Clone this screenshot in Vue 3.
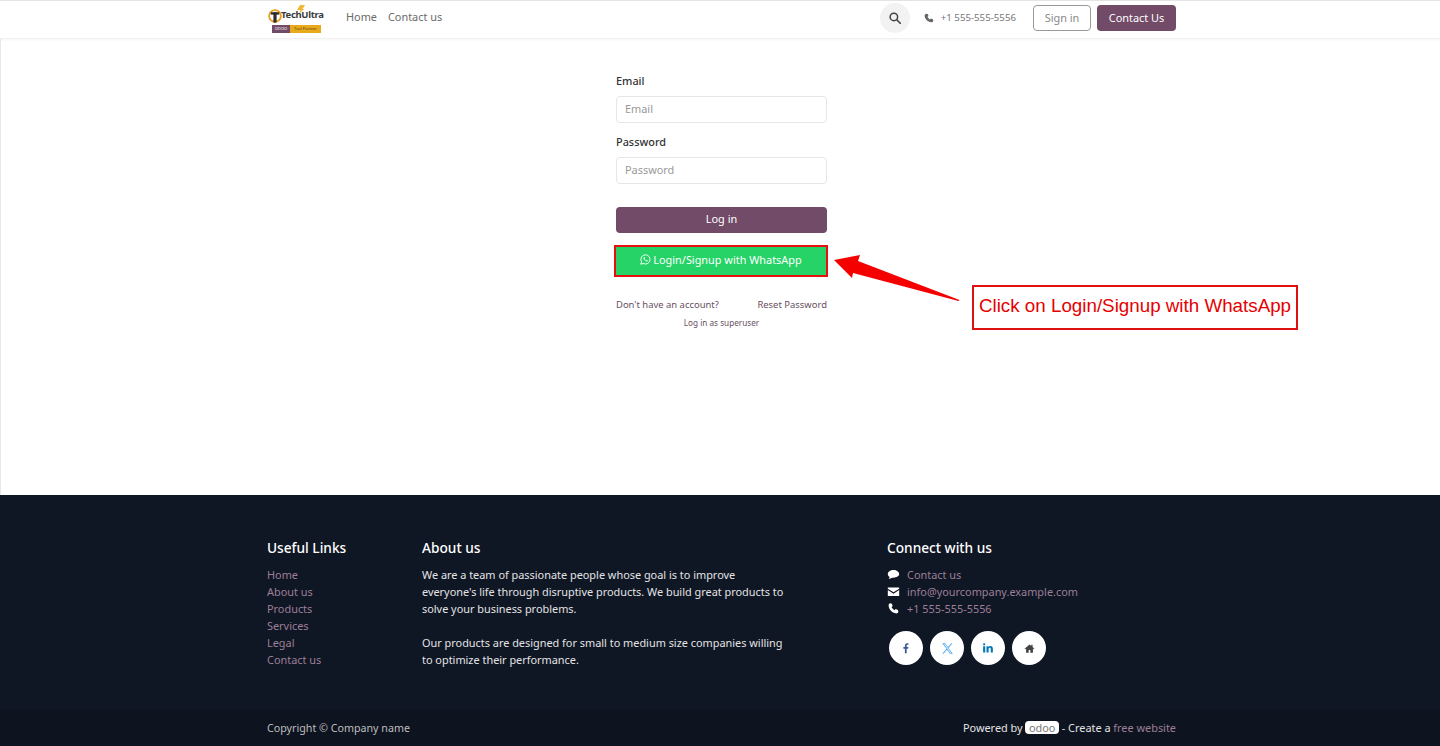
<template>
  <div class="page">
    <header class="topbar">
      <div class="wrap topbar-in">
        <div class="logo">
          <svg class="logo-flame" width="9" height="9" viewBox="0 0 9 9"><path d="M4 0h5L6.500 4 8 4 3 9 4.500 5H1Z" fill="#f2b632" /></svg>
          <svg class="logo-mark" width="14" height="14" viewBox="0 0 15 15">
            <circle cx="7.500" cy="7.500" r="6.300" fill="none" stroke="#e8a020" stroke-width="2" />
            <rect x="3" y="3.500" width="9" height="2.500" fill="#2b2b2b" />
            <rect x="5.800" y="3.500" width="3.400" height="11" fill="#2b2b2b" />
          </svg>
          <div class="logo-text">
            <span class="logo-name">TechUltra</span>
            <div class="logo-tags"><span class="tag-a">ODOO</span><span class="tag-b">Tool Partner</span></div>
          </div>
        </div>
        <nav class="nav">
          <a v-for="item in navItems" :key="item">{{ item }}</a>
        </nav>
        <div class="spacer"></div>
        <div class="search">
          <svg width="12" height="12" viewBox="0 0 16 16">
            <circle cx="6.500" cy="6.500" r="5" fill="none" stroke="#444" stroke-width="2" />
            <path d="M10.300 10.300 15 15" stroke="#444" stroke-width="2.200" stroke-linecap="round" />
          </svg>
        </div>
        <div class="phone">
          <svg width="10" height="10" viewBox="0 0 16 16"><path :d="phonePath" fill="#666" /></svg>
          <span>+1 555-555-5556</span>
        </div>
        <a class="btn-signin">Sign in</a>
        <a class="btn-contact">Contact Us</a>
      </div>
    </header>

    <main class="main">
      <div class="wrap main-in">
        <form class="login" @submit.prevent>
          <label class="lbl">Email</label>
          <input class="field" placeholder="Email" />
          <label class="lbl lbl-pw">Password</label>
          <input class="field" placeholder="Password" />
          <button class="btn-login">Log in</button>
          <div class="wa-outline">
            <button class="btn-wa">
              <svg width="11" height="11" viewBox="0 0 16 16">
                <path d="M8 1.200A6.700 6.700 0 0 0 2.200 11.300L1.200 14.800l3.600-.95A6.700 6.700 0 1 0 8 1.200Z" fill="none" stroke="#fff" stroke-width="1.400" />
                <path d="M5.800 4.700c-.9.700-.9 2 .1 3.400 1 1.500 2.500 2.800 4 2.900.9 0 1.500-.6 1.500-1.400l-1.500-.8-.7.700c-.9-.3-2-1.400-2.400-2.400l.6-.7-.7-1.600Z" fill="#fff" />
              </svg>
              Login/Signup with WhatsApp
            </button>
          </div>
          <div class="login-links">
            <a>Don't have an account?</a>
            <a>Reset Password</a>
          </div>
          <a class="superuser">Log in as superuser</a>
        </form>
      </div>

      <svg class="arrow" width="130" height="55" viewBox="0 0 130 55">
        <path d="M0 10 26 5 24 11 125.500 50 124.500 51 19 23 18 28Z" fill="#f50000" />
      </svg>
      <div class="callout">Click on Login/Signup with WhatsApp</div>
    </main>

    <footer class="footer">
      <div class="wrap footer-cols">
        <div class="col-links">
          <h5>Useful Links</h5>
          <a v-for="link in usefulLinks" :key="link">{{ link }}</a>
        </div>
        <div class="col-about">
          <h5>About us</h5>
          <p>We are a team of passionate people whose goal is to improve everyone's life through disruptive products. We build great products to solve your business problems.</p>
          <p>Our products are designed for small to medium size companies willing to optimize their performance.</p>
        </div>
        <div class="col-connect">
          <h5>Connect with us</h5>
          <div class="contact-row">
            <svg width="13" height="13" viewBox="0 0 16 16"><path d="M8 2.500c-3.900 0-7 2.200-7 5 0 1.500.9 2.800 2.300 3.700-.2 1-.8 1.800-1.300 2.300 1.500-.1 3-.7 4-1.500h2c3.900 0 7-2 7-4.500s-3.100-5-7-5Z" fill="#fff" /></svg>
            <a>Contact us</a>
          </div>
          <div class="contact-row">
            <svg width="13" height="13" viewBox="0 0 16 16"><path d="M1 3h14v1.500L8 9 1 4.500Zm0 3.200L8 10.800l7-4.600V13.500H1Z" fill="#fff" /></svg>
            <a>info@yourcompany.example.com</a>
          </div>
          <div class="contact-row">
            <svg width="13" height="13" viewBox="0 0 16 16"><path d="M4 1.500 6 2l1 3-1.400 1.200c.7 1.700 2 3 3.700 3.900l1.300-1.400 2.900 1.100.5 2.200c-.4 1.300-1.300 2-2.500 2C6 13.500 2 8.800 2 4c0-1.300.8-2.200 2-2.500Z" fill="#fff" /></svg>
            <a>+1 555-555-5556</a>
          </div>
          <div class="socials">
            <span class="soc fb">
              <svg width="12" height="12" viewBox="0 0 16 16"><path d="M6.500 15V9H4.500V6.500h2V4.800C6.500 2.700 7.700 1.500 9.600 1.500c.8 0 1.500.1 1.700.1v2.200h-1.200c-1 0-1.200.5-1.200 1.200v1.500h2.300L10.900 9H8.900v6Z" fill="currentColor" /></svg>
            </span>
            <span class="soc tw">
              <svg width="13" height="13" viewBox="0 0 16 16"><path d="M1.500 1.500h3.600l3.500 4.800 4-4.800h1.500L9.300 7.300l5.300 7.200H11L7.400 9.400l-4.300 5.100H1.600l5.100-6.100ZM3.800 2.600l7.800 10.800h1.100L4.900 2.600Z" fill="currentColor" /></svg>
            </span>
            <span class="soc li">
              <svg width="12" height="12" viewBox="0 0 16 16"><path d="M1.500 5.500h2.800V14H1.500ZM2.900 1.500a1.500 1.500 0 1 1 0 3 1.500 1.500 0 0 1 0-3ZM6 5.500h2.600v1.200c.5-.8 1.400-1.400 2.700-1.400 2.300 0 3.200 1.400 3.200 3.800V14h-2.800V9.600c0-1.200-.3-2-1.300-2-1.100 0-1.600.8-1.600 2V14H6Z" fill="currentColor" /></svg>
            </span>
            <span class="soc home">
              <svg width="11" height="11" viewBox="0 0 16 16"><path d="M8 2 .8 8.200l.9 1L3 8.100V14h3.800v-3.700h2.400V14H13V8.100l1.300 1.100.9-1-2.700-2.300V2.500h-2v1.700Z" fill="currentColor" /></svg>
            </span>
          </div>
        </div>
      </div>
      <div class="copyright">
        <div class="wrap copyright-in">
          <span class="copy-left">Copyright © Company name</span>
          <span class="copy-right">
            Powered by <span class="odoo"><i>odoo</i></span> - Create a <a>free website</a>
          </span>
        </div>
      </div>
    </footer>
  </div>
</template>

<script setup>
const navItems = ["Home", "Contact us"];
const usefulLinks = ["Home", "About us", "Products", "Services", "Legal", "Contact us"];
const phonePath =
  "M3.600 1 6 1.500l1.200 3.200-1.600 1.300c.8 1.800 2.300 3.300 4.100 4.200l1.400-1.600 3.200 1.200.5 2.400c-.4 1.500-1.500 2.500-3 2.500C6 14.500 1 9.300 1 4c0-1.500 1.100-2.600 2.600-3Z";
</script>

<style>
html,
body {
  margin: 0;
  background: #fff;
}
</style>

<style scoped>
.page {
  font-family: "Noto Sans", "Open Sans", sans-serif;
  font-size: 10.900px;
  color: #333;
  height: 746px;
  display: flex;
  flex-direction: column;
  overflow: hidden;
}
.wrap {
  width: 909px;
  margin-left: 267px;
}

/* header */
.topbar {
  height: 39px;
  box-sizing: border-box;
  border-top: 1px solid #e4e4e4;
  border-bottom: 1px solid #f0f0f0;
  box-shadow: 0 1px 2px rgba(0, 0, 0, 0.04);
  background: #fff;
}
.topbar-in {
  height: 100%;
  box-sizing: border-box;
  padding-bottom: 3px;
  display: flex;
  align-items: center;
}
.logo {
  position: relative;
  width: 57px;
  height: 28px;
  display: flex;
  align-items: flex-start;
  margin-top: 1px;
}
.logo-flame {
  position: absolute;
  left: 29px;
  top: 0;
}
.logo-mark {
  position: relative;
  margin: 4px 0 0 1px;
  flex: none;
}
.logo-text {
  position: relative;
  margin-left: -1px;
  white-space: nowrap;
}
.logo-name {
  display: block;
  font-family: "Noto Sans", sans-serif;
  font-weight: 700;
  font-size: 9.500px;
  line-height: 13px;
  margin-top: 3px;
  letter-spacing: -0.3px;
  color: #3a3a3a;
}
.logo-tags {
  display: flex;
  margin: 4px 0 0 -9px;
  font-size: 4px;
  line-height: 8px;
  color: #fff;
}
.tag-a {
  background: #714b67;
  width: 18px;
  text-align: center;
}
.tag-b {
  background: #e8a91c;
  width: 31px;
  text-align: center;
  color: #5a4310;
}
.nav {
  margin-left: 22px;
  margin-bottom: 3px;
  display: flex;
  gap: 11px;
  font-size: 10.900px;
  color: #6b6b6b;
}
.spacer {
  flex: 1;
}
.search {
  width: 30px;
  height: 30px;
  border-radius: 50%;
  background: #f2f2f2;
  display: flex;
  align-items: center;
  justify-content: center;
}
.phone {
  margin-left: 14px;
  margin-bottom: 1px;
  display: flex;
  align-items: center;
  gap: 7px;
  font-size: 9.700px;
  color: #777;
}
.btn-signin {
  margin-left: 17px;
  width: 58px;
  height: 26px;
  box-sizing: border-box;
  border: 1px solid #999;
  border-radius: 4px;
  padding-bottom: 2px;
  display: flex;
  align-items: center;
  justify-content: center;
  color: #8a8a8a;
}
.btn-contact {
  margin-left: 6px;
  width: 79px;
  height: 26px;
  box-sizing: border-box;
  border-radius: 4px;
  padding-bottom: 2px;
  background: #714b67;
  color: #fff;
  display: flex;
  align-items: center;
  justify-content: center;
}

/* login form */
.main {
  position: relative;
  flex: 1;
  box-sizing: border-box;
  border-left: 1px solid #e8e8e8;
}
.main-in {
  margin-left: 266px;
  display: flex;
  justify-content: center;
}
.login {
  width: 211px;
  padding-top: 34px;
  display: flex;
  flex-direction: column;
}
.lbl {
  font-size: 10.900px;
  line-height: 16px;
  color: #333;
  font-weight: 500;
  margin-bottom: 7px;
}
.lbl-pw {
  margin-top: 11px;
}
.field {
  height: 27px;
  box-sizing: border-box;
  border: 1px solid #e6e6e6;
  border-radius: 4px;
  padding: 0 8px 2px;
  font: inherit;
  outline: none;
}
.field::placeholder {
  color: #999;
}
.btn-login {
  margin-top: 23px;
  height: 26px;
  border: 0;
  border-radius: 4px;
  padding: 0 0 3px;
  background: #714b67;
  color: #fff;
  font: inherit;
}
.wa-outline {
  margin: 12px -1px 0 -2px;
  height: 32px;
  box-sizing: border-box;
  border: 2px solid #e80f0f;
  display: flex;
}
.btn-wa {
  flex: 1;
  border: 0;
  padding: 0 0 3px;
  background: #25d366;
  color: #fff;
  font: inherit;
  display: flex;
  align-items: center;
  justify-content: center;
  gap: 2px;
}
.login-links {
  margin-top: 20px;
  display: flex;
  justify-content: space-between;
  font-size: 9.450px;
  line-height: 16px;
  color: #68505f;
}
.superuser {
  margin-top: 3px;
  text-align: center;
  font-size: 8.200px;
  line-height: 14px;
  color: #68505f;
}

/* annotation */
.arrow {
  position: absolute;
  left: 833px;
  top: 211px;
}
.callout {
  position: absolute;
  left: 971px;
  top: 246px;
  width: 326px;
  height: 45px;
  box-sizing: border-box;
  border: 2px solid #e01010;
  padding-bottom: 3px;
  background: #fff;
  color: #e60000;
  font-family: "Liberation Sans", sans-serif;
  font-size: 18.800px;
  display: flex;
  align-items: center;
  justify-content: center;
  white-space: nowrap;
}

/* footer */
.footer {
  height: 251px;
  flex: none;
  background: #0f1624;
  color: #e4e4e4;
  display: flex;
  flex-direction: column;
}
.footer-cols {
  display: flex;
  flex: 1;
  padding-top: 43px;
  box-sizing: border-box;
  line-height: 17px;
}
.footer h5 {
  margin: 0 0 8px;
  font-size: 13.700px;
  line-height: 20px;
  font-weight: 500;
  color: #fff;
}
.col-links {
  width: 155px;
  display: flex;
  flex-direction: column;
}
.col-links a,
.col-connect a {
  color: #9d7f97;
}
.col-about {
  width: 465px;
}
.col-about p {
  width: 368px;
  margin: 0 0 17px;
}
.contact-row {
  display: flex;
  align-items: center;
  gap: 7px;
  height: 17px;
}
.socials {
  margin-top: 14px;
  display: flex;
  gap: 7px;
  padding-left: 2px;
}
.soc {
  width: 34px;
  height: 34px;
  border-radius: 50%;
  background: #fff;
  display: flex;
  align-items: center;
  justify-content: center;
}
.fb {
  color: #3b5998;
}
.tw {
  color: #55acee;
}
.li {
  color: #0077b5;
}
.home {
  color: #444;
}
.copyright {
  height: 36px;
  background: #0e1320;
}
.copyright-in {
  height: 100%;
  box-sizing: border-box;
  padding-bottom: 2px;
  display: flex;
  align-items: center;
  justify-content: space-between;
}
.copy-left {
  margin-top: 2px;
  color: #bdbdbd;
  font-size: 10.700px;
}
.copy-right a {
  color: #9d7f97;
}
.odoo {
  display: inline-block;
  background: #fff;
  border-radius: 4px;
  padding: 0 3.500px;
  line-height: 13px;
  color: #777;
}
.odoo i {
  font-style: normal;
}
</style>
